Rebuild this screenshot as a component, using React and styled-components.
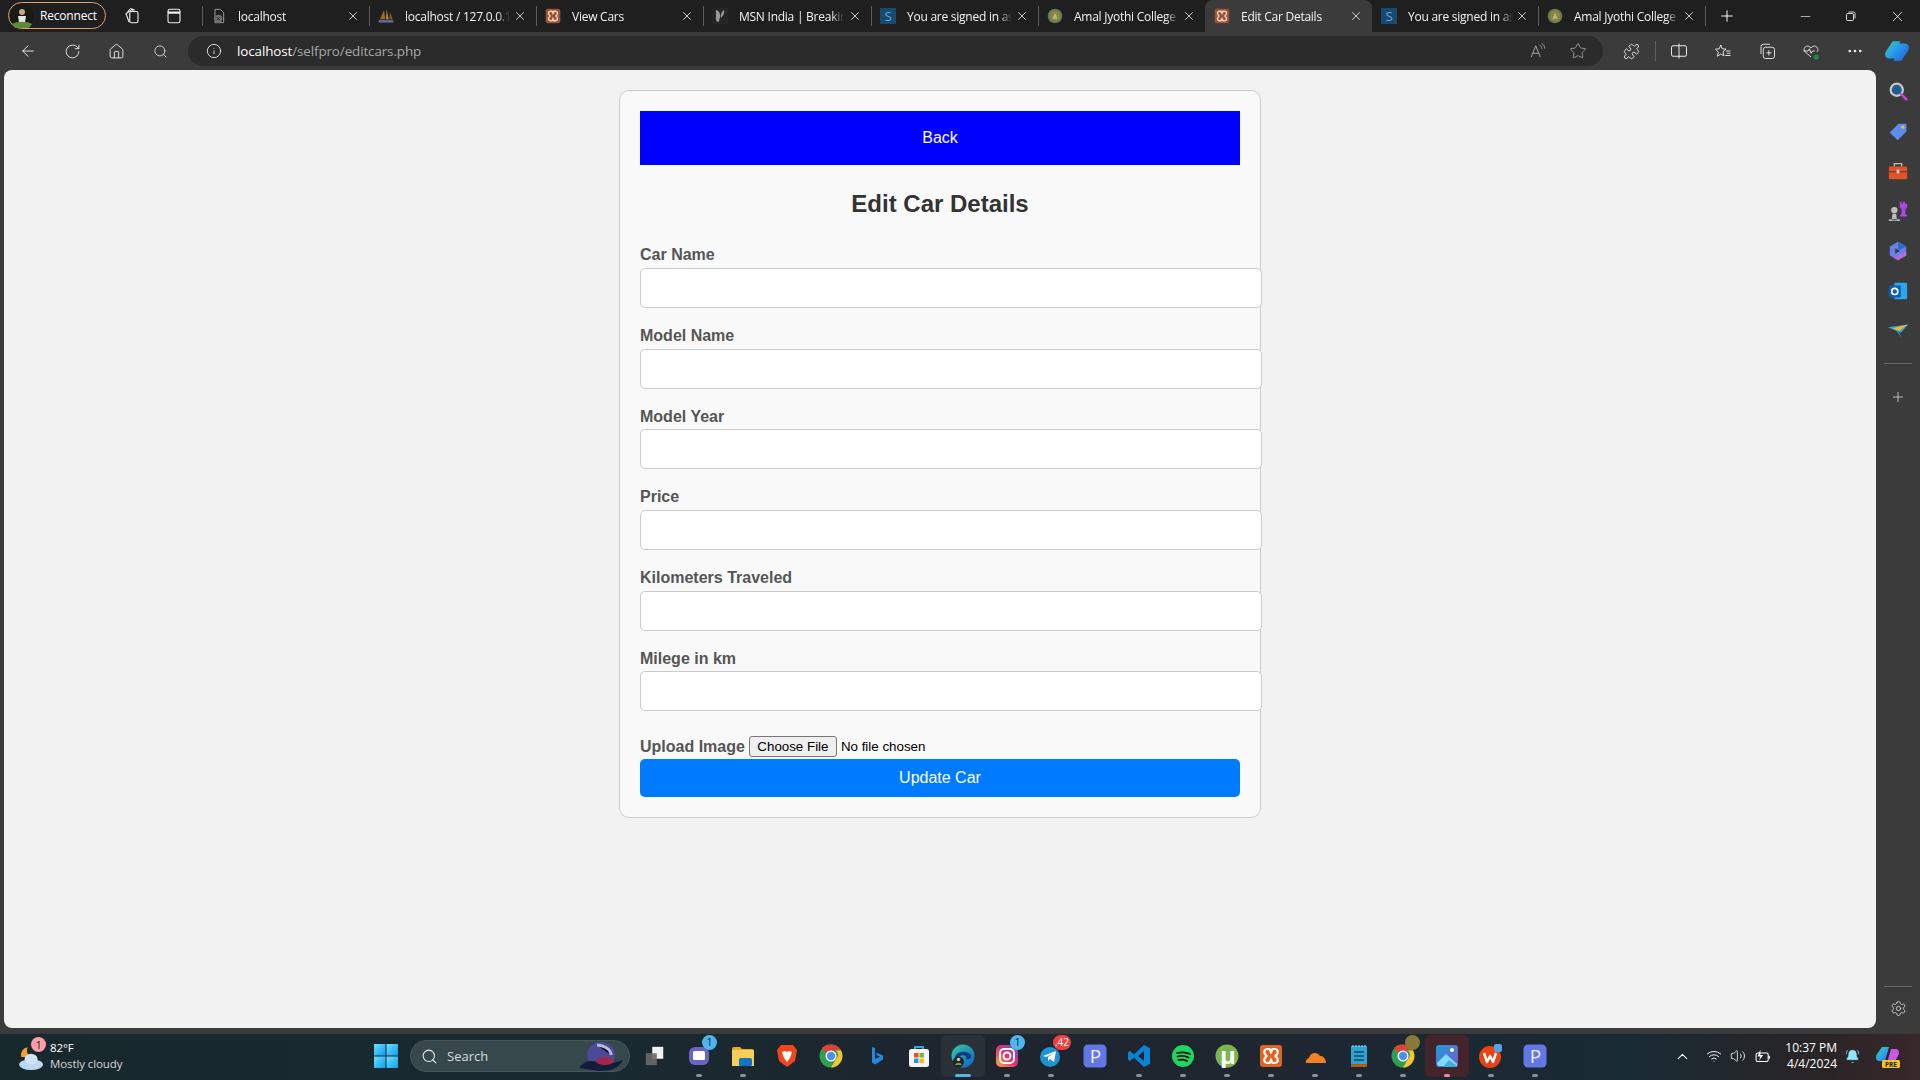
import React from "react";
import styled, { createGlobalStyle } from "styled-components";
import {
  ArrowLeft, RotateCw, Home, Search, Info, Star, Puzzle, X, Plus, Minus, MoreHorizontal, Settings,
  ChevronUp, Wifi, Volume2, BellRing,
} from "lucide-react";

const Global = createGlobalStyle`
  html, body { margin: 0; padding: 0; height: 100%; overflow: hidden; background: #3b3b3b; }
  * { box-sizing: border-box; }
`;

const Shell = styled.div`
  width: 1920px; height: 1080px; display: flex; flex-direction: column; overflow: hidden;
  background: #3b3b3b; font-family: "Open Sans", "Noto Sans", sans-serif; color: #fff;
`;

/* ---------- tab strip ---------- */
const TabStrip = styled.div`
  height: 32px; flex: none; background: #1f1f1f; display: flex; align-items: stretch; padding-left: 8px;
`;
const ProfilePill = styled.div`
  width: 98px; height: 27px; margin-top: 2px; border: 1px solid #e0a26a; border-radius: 14px;
  display: flex; align-items: center; gap: 6px; padding-left: 1px; font-size: 12px; letter-spacing: -0.2px;
`;
const StripIcon = styled.div`
  width: ${(p) => p.$w || 42}px; display: flex; align-items: center; justify-content: center; flex: none;
  margin-left: ${(p) => p.$ml || 0}px;
`;
const Tab = styled.div`
  position: relative; width: ${(p) => p.$w || 167}px; flex: none; display: flex; align-items: center; padding: 0 9px;
  font-size: 12px; letter-spacing: -0.25px; color: #f2f2f2;
  background: ${(p) => (p.$active ? "#3b3b3b" : "transparent")};
  border-radius: ${(p) => (p.$active ? "8px 8px 0 0" : "0")};
  &::before {
    content: ""; position: absolute; left: 0; top: 6px; height: 20px; width: 1px;
    background: ${(p) => (p.$sep ? "#5c5c5c" : "transparent")};
  }
`;
const FaviconBox = styled.span`
  width: 16px; height: 16px; flex: none; display: flex; margin-right: 11px;
  svg { display: block; }
`;
const TabLabel = styled.span`
  width: 105px; flex: none; white-space: nowrap; overflow: hidden;
  -webkit-mask-image: linear-gradient(to right, #000 88%, transparent 100%);
  mask-image: linear-gradient(to right, #000 88%, transparent 100%);
`;
const TabClose = styled.span`
  margin-left: auto; display: flex; color: #eee;
`;
const StripDivider = styled.div`
  width: 1px; height: 20px; margin-top: 6px; background: #5c5c5c; flex: none;
`;
const NewTab = styled.div`
  width: 42px; display: flex; align-items: center; justify-content: center; flex: none;
`;
const WindowControls = styled.div`
  margin-left: auto; display: flex; height: 100%;
`;
const WinButton = styled.div`
  width: 46px; display: flex; align-items: center; justify-content: center;
`;

/* ---------- toolbar ---------- */
const Toolbar = styled.div`
  height: 38px; flex: none; background: #3b3b3b; display: flex; align-items: center; padding-left: 6px;
`;
const NavButton = styled.div`
  width: 44px; height: 30px; display: flex; align-items: center; justify-content: center; flex: none; color: #f0f0f0;
`;
const AddressBar = styled.div`
  width: 1415px; height: 30px; margin-left: 6px; flex: none; background: #2b2b2b; border-radius: 15px;
  display: flex; align-items: center; padding-left: 18px; font-size: 13.4px; letter-spacing: -0.1px;
`;
const Url = styled.span`
  margin-left: 15px; color: #a8a8a8;
  b { font-weight: 400; color: #fff; }
`;
const BarIcons = styled.div`
  margin-left: auto; display: flex; align-items: center; padding-right: 5px;
`;
const BarIcon = styled.div`
  width: 40px; display: flex; align-items: center; justify-content: center; color: #b8b8b8;
`;
const ToolIcons = styled.div`
  display: flex; align-items: center; margin-left: 8px;
`;
const ToolIcon = styled.div`
  width: ${(p) => p.$w || 44}px; height: 30px; display: flex; align-items: center; justify-content: center; color: #eee; flex: none;
`;
const ToolSep = styled.div`
  width: 1px; height: 20px; background: #5c5c5c; margin: 0 1px 0 4px;
`;

/* ---------- middle ---------- */
const Middle = styled.div`
  flex: 1; min-height: 0; display: flex;
`;
const Page = styled.main`
  width: 1872px; margin-left: 4px; background: #f2f2f2; border-radius: 8px; padding-top: 20px;
  display: flex; flex-direction: column; align-items: center; font-family: "Liberation Sans", Arial, sans-serif;
`;
const Card = styled.div`
  width: 642px; padding: 20px; background: #f9f9f9; border: 1px solid #ccc; border-radius: 10px;
`;
const BackButton = styled.button`
  display: block; width: 600px; height: 54px; border: 0; background: #0000ff; color: #fff; font: 16px "Liberation Sans", Arial, sans-serif;
`;
const Title = styled.h2`
  margin: 25px 0 28.5px; text-align: center; font-size: 24px; line-height: 27.6px; color: #333; font-weight: 700;
`;
const FieldLabel = styled.label`
  display: block; font-size: 16px; font-weight: 700; line-height: 18.7px; margin-bottom: 3px; color: #555;
`;
const TextInput = styled.input`
  display: block; width: 622px; height: 40px; margin-bottom: 19px; padding: 10px; background: #fff;
  border: 1px solid #ccc; border-radius: 5px; font: 16px "Liberation Sans", Arial, sans-serif;
`;
const UploadRow = styled.div`
  display: flex; align-items: center; height: 21px; margin: 25px 0 2px;
`;
const UploadLabel = styled.label`
  font-size: 16px; font-weight: 700; color: #555; margin-right: 4px; white-space: nowrap;
`;
const FileInput = styled.input`
  font: 13.33px "Liberation Sans", Arial, sans-serif; color: #000; width: 300px;
  &::file-selector-button {
    height: 21px; padding: 1px 6px; margin-right: 4px; font: 13.33px "Liberation Sans", Arial, sans-serif;
    background: #efefef; border: 1px solid #767676; border-radius: 3px; color: #000; width: 88px;
  }
`;
const SubmitButton = styled.button`
  display: block; width: 600px; height: 38px; border: 0; border-radius: 5px; background: #007bff; color: #fff;
  font: 16px "Liberation Sans", Arial, sans-serif;
`;

const SideBar = styled.aside`
  width: 44px; flex: none; display: flex; flex-direction: column; align-items: center; padding-top: 1px;
`;
const SideIcon = styled.div`
  width: 44px; height: 40px; flex: none; display: flex; align-items: center; justify-content: center; color: #e8e8e8;
`;
const SideRule = styled.div`
  width: 28px; height: 1px; background: #666; flex: none; margin: ${(p) => p.$m};
`;

/* ---------- taskbar ---------- */
const GapStrip = styled.div`
  height: 5px; flex: none; background: #3b3b3b;
`;
const Taskbar = styled.footer`
  height: 47px; flex: none; display: flex; align-items: center; border-top: 1px solid #35393b; padding-bottom: 2px;
  background: linear-gradient(90deg, #17292d 0%, #182a30 30%, #1e252e 50%, #1f2630 65%, #182a33 85%, #2a2426 95%, #38282a 100%);
`;
const Weather = styled.div`
  width: 374px; flex: none; position: relative; padding-left: 50px; font-size: 11.5px; line-height: 16px; letter-spacing: -0.1px;
  color: #d6d6d6; height: 100%; display: flex; flex-direction: column; justify-content: center;
  strong { font-weight: 500; color: #fff; display: block; }
`;
const WeatherGlyph = styled.span`
  position: absolute; left: 17px; top: 10px; display: flex;
`;
const WeatherBadge = styled.span`
  position: absolute; left: 31px; top: 3px; width: 15px; height: 15px; border-radius: 50%; background: #ff9ea8; color: #222;
  font-size: 11px; line-height: 15px; text-align: center;
`;
const StartButton = styled.div`
  width: 24px; display: flex; flex: none;
`;
const SearchPill = styled.div`
  width: 220px; height: 32px; margin-left: 12px; flex: none; background: #37484d; border: 1px solid #46565a; border-radius: 16px;
  display: flex; align-items: center; padding-left: 10px; font-size: 13px; color: #d8dcdc; gap: 9px; position: relative; overflow: hidden;
`;
const PillArt = styled.span`
  position: absolute; right: 2px; top: 0; display: flex;
`;
const TaskSlot = styled.div`
  width: 44px; height: 42px; flex: none; position: relative; display: flex; align-items: center; justify-content: center;
  border-radius: 5px; margin-left: ${(p) => p.$ml || 0}px;
  background: ${(p) => p.$bg || "transparent"};
`;
const RunDot = styled.span`
  position: absolute; bottom: 0; left: 50%; transform: translateX(-50%); height: 3px; border-radius: 2px;
  width: ${(p) => (p.$active ? 16 : 6)}px;
  background: ${(p) => p.$color || "#8f8f8f"};
`;
const Badge = styled.span`
  position: absolute; top: 0; right: ${(p) => p.$r ?? 4}px; min-width: 15px; height: 15px; border-radius: 8px; padding: 0 2px;
  background: ${(p) => p.$bg || "#4fb5ee"}; color: ${(p) => p.$fg || "#12222c"}; font-size: 10px; line-height: 15px; text-align: center;
`;
const Tray = styled.div`
  margin-left: auto; display: flex; align-items: center; color: #fff; height: 100%; padding-right: 6px;
`;
const TrayIcon = styled.div`
  width: ${(p) => p.$w || 24}px; display: flex; justify-content: center; flex: none;
  margin-left: ${(p) => p.$ml || 0}px;
`;
const Clock = styled.div`
  width: 62px; margin-left: 1px; text-align: right; font-size: 12px; line-height: 16px; white-space: nowrap;
`;

/* ---------- drawings ---------- */
const S = ({ s = 16, children, vb = "0 0 24 24" }) => (
  <svg width={s} height={s} viewBox={vb} fill="none">{children}</svg>
);
const XamppGlyph = ({ bg = "#9a5230", fg = "#eed4c6" }) => (
  <>
    <rect x="1" y="1" width="22" height="22" rx="3" fill={bg} />
    <path d="M8 5h2.500l1.500 3 1.500-3H16a3 3 0 0 1 2 5l-1.500 2 1.500 2a3 3 0 0 1-2 5h-2.500L12 16l-1.500 3H8a3 3 0 0 1-2-5l1.500-2L6 10a3 3 0 0 1 2-5z" stroke={fg} strokeWidth="2.200" />
  </>
);
const LetterS = () => (
  <>
    <rect x="0" y="0" width="24" height="24" fill="#174a6e" />
    <text x="12" y="19" textAnchor="middle" fontSize="20" fontFamily="Open Sans" fill="#6ba6cf">S</text>
  </>
);
const AmalGlyph = () => (
  <>
    <circle cx="12" cy="12" r="11" fill="#5a7a62" />
    <circle cx="12" cy="12" r="8.500" fill="#8d8434" />
    <path d="M12 7l4 9H8z" fill="#b7b6a0" />
  </>
);
const Favicons = {
  file: (
    <>
      <path d="M6 2h8l5 5v15H6z" stroke="#9a9a9a" strokeWidth="1.500" />
      <circle cx="11" cy="16" r="6" fill="#6d6d6d" />
      <path d="M9 14l4 4m0-4l-4 4" stroke="#1f1f1f" strokeWidth="1.200" />
    </>
  ),
  pma: (
    <>
      <path d="M3 17L9 3l2 14z" fill="#9a6a32" />
      <path d="M12 17l1-15 3 15z" fill="#c08a45" />
      <path d="M17 17l1-11 4 11z" fill="#8a5a2a" />
      <rect x="1" y="18" width="22" height="4" fill="#5f6b8c" />
    </>
  ),
  xampp: <XamppGlyph />,
  msn: (
    <>
      <rect width="24" height="24" fill="#262626" />
      <path d="M6 3c5 1 7 6 6 11l-2 7c-3 0-5-4-4-8zM18 3c1 5-1 9-5 12 0-5 1-9 5-12z" fill="#9a9a9a" />
    </>
  ),
  s: <LetterS />,
  amal: <AmalGlyph />,
};
const Favicon = ({ k }) => <FaviconBox><S>{Favicons[k]}</S></FaviconBox>;

const ChromeLogo = () => (
  <>
    <circle cx="12" cy="12" r="11.500" fill="#2e9e4f" />
    <path d="M12 .5A11.500 11.500 0 0 1 22 6.500H12A5.500 5.500 0 0 0 7 9.500L3 3.800A11.500 11.500 0 0 1 12 .5z" fill="#e0413a" />
    <path d="M22 6.500A11.500 11.500 0 0 1 12 23.500l5-8.500a5.500 5.500 0 0 0 0-8.500z" fill="#f8c52f" />
    <circle cx="12" cy="12" r="5.500" fill="#fff" />
    <circle cx="12" cy="12" r="4.200" fill="#4a8ff0" />
  </>
);
const PLogo = () => (
  <>
    <rect x="0.500" y="0.500" width="23" height="23" rx="4.500" fill="#6376e6" />
    <text x="12.500" y="19" textAnchor="middle" fontSize="19" fontFamily="Open Sans" fill="#eef0ff">P</text>
  </>
);
const Defs = () => (
  <svg width="0" height="0" style={{ position: "absolute" }}>
    <defs>
      <linearGradient id="ig" x1="0" y1="1" x2="1" y2="0">
        <stop offset="0" stopColor="#f9b23c" /><stop offset=".5" stopColor="#e1306c" /><stop offset="1" stopColor="#6a4be0" />
      </linearGradient>
      <linearGradient id="edge" x1="0" y1="0" x2="1" y2="1">
        <stop offset="0" stopColor="#38c8a0" /><stop offset="1" stopColor="#1060c8" />
      </linearGradient>
      <linearGradient id="photo" x1="0" y1="0" x2="1" y2="1">
        <stop offset="0" stopColor="#1b9be0" /><stop offset="1" stopColor="#7a5ac8" />
      </linearGradient>
      <linearGradient id="copilot" x1="0" y1="0" x2="1" y2="1">
        <stop offset="0" stopColor="#37d39c" /><stop offset=".6" stopColor="#2b9cf0" /><stop offset="1" stopColor="#1f6ae0" />
      </linearGradient>
      <linearGradient id="copilot2" x1="0" y1="0" x2="1" y2="1">
        <stop offset="0" stopColor="#2bb0f0" /><stop offset="1" stopColor="#1f5ae0" />
      </linearGradient>
      <linearGradient id="win" x1="0" y1="0" x2="1" y2="1">
        <stop offset="0" stopColor="#6ce0ff" /><stop offset="1" stopColor="#0f9cf0" />
      </linearGradient>
    </defs>
  </svg>
);

const Apps = {
  teams: (
    <>
      <rect x="2" y="3" width="20" height="18" rx="6" fill="#6a64c8" />
      <rect x="6" y="7" width="12" height="9" rx="1.500" fill="#fff" />
    </>
  ),
  explorer: (
    <>
      <path d="M1 5a2 2 0 0 1 2-2h6l2 2h10a2 2 0 0 1 2 2v14H1z" fill="#e3ad2c" />
      <rect x="1" y="6" width="22" height="16" fill="#f6cf58" />
      <rect x="8" y="14" width="13" height="8" rx="1.500" fill="#1473c4" />
    </>
  ),
  brave: (
    <>
      <path d="M6 1h12l4 5-2 11-8 6-8-6L2 6z" fill="#f1461b" />
      <path d="M7 8l3-1 2 1 2-1 3 1-2 6-3 4-3-4z" fill="#fff" />
    </>
  ),
  chrome: <ChromeLogo />,
  bing: <path d="M9 3l3 1v11l5-2.500-3-1-1-3 7 3v4l-8 5-3-2z" fill="#1f8ae0" />,
  store: (
    <>
      <path d="M8 6V3h8v3" stroke="#29a9e8" strokeWidth="2" />
      <rect x="2" y="5" width="20" height="18" rx="2.500" fill="#f4f4f4" />
      <rect x="7" y="9" width="4.500" height="4.500" fill="#e8502a" />
      <rect x="12.500" y="9" width="4.500" height="4.500" fill="#7ab828" />
      <rect x="7" y="14.500" width="4.500" height="4.500" fill="#1a9be0" />
      <rect x="12.500" y="14.500" width="4.500" height="4.500" fill="#f8b81a" />
    </>
  ),
  edge: (
    <>
      <circle cx="12" cy="12" r="11.500" fill="url(#edge)" />
      <path d="M4 13c2-6 12-7 16-2 1 3-2 5-5 4 2-3-3-5-6-3-2 2-1 6 2 8-4 0-7-3-7-7z" fill="#0b3c84" />
      <circle cx="7.500" cy="18" r="5.500" fill="#1d2430" />
      <circle cx="7.500" cy="15.500" r="1.800" fill="#d8c0a0" />
      <path d="M4 21c1-3 6-3 7 0z" fill="#7a9a40" />
    </>
  ),
  instagram: (
    <>
      <rect x="1" y="1" width="22" height="22" rx="5" fill="url(#ig)" />
      <rect x="5" y="5" width="14" height="14" rx="4" stroke="#fff" strokeWidth="2" />
      <circle cx="12" cy="12" r="3.500" stroke="#fff" strokeWidth="2" />
    </>
  ),
  telegram: (
    <>
      <circle cx="11" cy="13" r="10" fill="#1c93d2" />
      <path d="M4 12l13-5-2 11-4-3-2 2v-4l6-4-8 4z" fill="#fff" />
    </>
  ),
  p: <PLogo />,
  vscode: (
    <path d="M17 1l6 3v16l-6 3-10-9.500L3 17l-2-1.500v-7L3 7l4 3.500zM17 7l-6 5 6 5z" fill="#0a84d6" fillRule="evenodd" />
  ),
  spotify: (
    <>
      <circle cx="12" cy="12" r="11" fill="#1ed760" />
      <path d="M6 9c4-1 9-1 13 1M6.500 12.500c4-1 8-.5 11 1M7.500 16c3-.7 6-.4 8.500 1" stroke="#121212" strokeWidth="1.800" strokeLinecap="round" />
    </>
  ),
  utorrent: (
    <>
      <circle cx="12" cy="12" r="11.500" fill="#7db54a" />
      <text x="13" y="20" textAnchor="middle" fontSize="24" fontFamily="Open Sans" fontWeight="700" fill="#fff">μ</text>
    </>
  ),
  xampp: <XamppGlyph bg="#e0651f" fg="#fff" />,
  cloudflare: (
    <path d="M3 19a4 4 0 0 1 3-5c1-5 8-7 11-2 3-.5 6 3 6 7z" fill="#f48120" />
  ),
  notepad: (
    <>
      <rect x="4" y="2" width="16" height="20" fill="#2ea3d0" />
      <rect x="4" y="20" width="16" height="3" fill="#a85a20" />
      <path d="M7 8h10M7 12h10M7 16h10" stroke="#0c4a68" strokeWidth="1.500" />
      <path d="M6 1v2M9 1v2M12 1v2M15 1v2M18 1v2" stroke="#bfe4f2" strokeWidth="1" />
    </>
  ),
  photos: (
    <>
      <rect x="1" y="1" width="22" height="22" rx="3" fill="url(#photo)" />
      <circle cx="17" cy="6" r="2" fill="#fff" />
      <path d="M2 19l9-9 11 10v2H3z" fill="#7fdcf8" />
      <path d="M8 23l6-7 8 6v1z" fill="#3ab0e0" />
    </>
  ),
  wps: (
    <>
      <circle cx="11" cy="13" r="11" fill="#e9430f" />
      <path d="M5 9l3 9 3-6 3 6 3-9" stroke="#fff" strokeWidth="2.400" strokeLinejoin="round" />
      <rect x="15" y="0" width="8" height="8" rx="2" fill="#5aa0e8" />
    </>
  ),
};

const taskApps = [
  { k: "teams", badge: "1", dot: true },
  { k: "explorer", dot: true },
  { k: "brave" },
  { k: "chrome" },
  { k: "bing" },
  { k: "store" },
  { k: "edge", active: true },
  { k: "instagram", badge: "1", dot: true },
  { k: "telegram", badge: ".42", red: true, dot: true },
  { k: "p" },
  { k: "vscode", dot: true },
  { k: "spotify", dot: true },
  { k: "utorrent", dot: true },
  { k: "xampp", dot: true },
  { k: "cloudflare", dot: true },
  { k: "notepad", dot: true },
  { k: "chrome", dot: true, avatar: true },
  { k: "photos", photo: true },
  { k: "wps", dot: true },
  { k: "p", dot: true },
];

const tabs = [
  { k: "file", t: "localhost", sep: true },
  { k: "pma", t: "localhost / 127.0.0.1 | phpMyAdmin", sep: true },
  { k: "xampp", t: "View Cars", sep: true },
  { k: "msn", t: "MSN India | Breaking News", sep: true, w: 168 },
  { k: "s", t: "You are signed in as", sep: true },
  { k: "amal", t: "Amal Jyothi College", sep: true },
  { k: "xampp", t: "Edit Car Details", active: true },
  { k: "s", t: "You are signed in as", w: 166 },
  { k: "amal", t: "Amal Jyothi College", sep: true },
];

const fields = ["Car Name", "Model Name", "Model Year", "Price", "Kilometers Traveled", "Milege in km"];

const sw = 1.25;

export default function App() {
  return (
    <Shell>
      <Global />
      <Defs />
      <TabStrip>
        <ProfilePill>
          <S s={24}>
            <circle cx="12" cy="12" r="12" fill="#1a1a14" />
            <circle cx="12" cy="8" r="3" fill="#c8a888" />
            <path d="M8 12h8l-1 6h-6z" fill="#e8e8e8" />
            <path d="M2 20c5-3 15-3 20 0l-3 4H5z" fill="#5f8a3a" />
          </S>
          Reconnect
        </ProfilePill>
        <StripIcon $ml={5}>
          <S s={18}>
            <rect x="9" y="6" width="11" height="15" rx="2.500" stroke="#eee" strokeWidth="1.500" />
            <path d="M8 20L4 9l8-6 2 3" stroke="#eee" strokeWidth="1.500" />
            <path d="M6 6l4-4 6 2" stroke="#eee" strokeWidth="1.200" />
          </S>
        </StripIcon>
        <StripIcon>
          <S s={18}>
            <rect x="4" y="3" width="16" height="18" rx="2.500" stroke="#eee" strokeWidth="1.500" />
            <path d="M4 7.500h16" stroke="#eee" strokeWidth="3" />
          </S>
        </StripIcon>
        <StripIcon $w={7} />
        {tabs.map((t, i) => (
          <Tab key={i} $sep={t.sep} $active={t.active} $w={t.w}>
            <Favicon k={t.k} />
            <TabLabel>{t.t}</TabLabel>
            <TabClose><X size={14} strokeWidth={1.4} /></TabClose>
          </Tab>
        ))}
        <StripDivider />
        <NewTab><Plus size={18} strokeWidth={1.3} /></NewTab>
        <WindowControls>
          <WinButton><Minus size={15} strokeWidth={1} /></WinButton>
          <WinButton>
            <S s={12}>
              <rect x="3" y="7" width="14" height="14" rx="2.500" stroke="#eee" strokeWidth="1.800" />
              <path d="M7 4h10a3 3 0 0 1 3 3v10" stroke="#eee" strokeWidth="1.800" />
            </S>
          </WinButton>
          <WinButton><X size={17} strokeWidth={1.1} /></WinButton>
        </WindowControls>
      </TabStrip>

      <Toolbar>
        <NavButton><ArrowLeft size={18} strokeWidth={sw} /></NavButton>
        <NavButton><RotateCw size={17} strokeWidth={sw} /></NavButton>
        <NavButton><Home size={17} strokeWidth={sw} /></NavButton>
        <NavButton><Search size={15} strokeWidth={sw} /></NavButton>
        <AddressBar>
          <Info size={16} strokeWidth={1.2} />
          <Url><b>localhost</b>/selfpro/editcars.php</Url>
          <BarIcons>
            <BarIcon>
              <S s={18}>
                <path d="M3 20L9 5l6 15M5 15h8" stroke="#a8a8a8" strokeWidth="1.300" />
                <path d="M14 4c2 1 3 3 3 5M17 2c3 2 4 4 4 7" stroke="#a8a8a8" strokeWidth="1.200" />
              </S>
            </BarIcon>
            <BarIcon><Star size={18} strokeWidth={1.1} color="#a8a8a8" /></BarIcon>
          </BarIcons>
        </AddressBar>
        <ToolIcons>
          <ToolIcon $w={40}><Puzzle size={17} strokeWidth={sw} /></ToolIcon>
          <ToolSep />
          <ToolIcon>
            <S s={18}>
              <rect x="2" y="5" width="20" height="14" rx="2" stroke="#eee" strokeWidth="1.300" />
              <path d="M12 2v20" stroke="#eee" strokeWidth="1.300" />
            </S>
          </ToolIcon>
          <ToolIcon>
            <S s={18}>
              <path d="M9 4l2 5 5 .5-4 3.500 1.300 5.500L9 16l-4.500 3 1.300-5.500L2 9.500 7 9z" stroke="#eee" strokeWidth="1.200" />
              <path d="M16 12h6M17 15h5M15 18h7" stroke="#eee" strokeWidth="1.200" />
            </S>
          </ToolIcon>
          <ToolIcon>
            <S s={18}>
              <rect x="7" y="7" width="15" height="15" rx="3" stroke="#eee" strokeWidth="1.200" />
              <path d="M4 16V6a3 3 0 0 1 3-3h9M14.500 11v7M11 14.500h7" stroke="#eee" strokeWidth="1.200" />
            </S>
          </ToolIcon>
          <ToolIcon>
            <S s={18}>
              <path d="M12 20L4 13c-4-5 3-11 8-5 5-6 12 0 8 5" stroke="#eee" strokeWidth="1.200" />
              <path d="M2 12h6l2-3 2 6 2-3h3" stroke="#eee" strokeWidth="1.200" />
              <circle cx="19" cy="20" r="3.500" fill="#1e8a3c" />
            </S>
          </ToolIcon>
          <ToolIcon><MoreHorizontal size={18} strokeWidth={1.6} /></ToolIcon>
          <ToolIcon $w={40}>
            <S s={26}>
              <path d="M8 3h7l-5 16H5C1 19 0 15 2 12z" fill="url(#copilot)" />
              <path d="M16 21H9l5-16h5c4 0 5 4 3 7z" fill="url(#copilot2)" />
            </S>
          </ToolIcon>
        </ToolIcons>
      </Toolbar>

      <Middle>
        <Page>
          <Card>
            <BackButton>Back</BackButton>
            <Title>Edit Car Details</Title>
            {fields.map((f) => (
              <div key={f}>
                <FieldLabel>{f}</FieldLabel>
                <TextInput type="text" />
              </div>
            ))}
            <UploadRow>
              <UploadLabel>Upload Image</UploadLabel>
              <FileInput type="file" />
            </UploadRow>
            <SubmitButton>Update Car</SubmitButton>
          </Card>
        </Page>
        <SideBar>
          <SideIcon>
            <S s={21}>
              <circle cx="10" cy="10" r="7" fill="#1d5f8c" stroke="#c8c8c8" strokeWidth="2.500" />
              <path d="M15 15l6 6" stroke="#d040e0" strokeWidth="3" strokeLinecap="round" />
            </S>
          </SideIcon>
          <SideIcon>
            <S s={21}>
              <path d="M12 3h8a1 1 0 0 1 1 1v8L11 22 2 13z" fill="#5b8cf0" />
              <circle cx="17" cy="7" r="1.800" fill="#f6c51a" />
            </S>
          </SideIcon>
          <SideIcon>
            <S s={22}>
              <path d="M8 7V4h8v3" stroke="#bbb" strokeWidth="1.500" />
              <rect x="2" y="7" width="20" height="14" rx="1.500" fill="#e0542a" />
              <rect x="2" y="12" width="20" height="1.500" fill="#9a3618" />
              <rect x="10.500" y="10.500" width="3" height="4" fill="#ddd" />
            </S>
          </SideIcon>
          <SideIcon>
            <S s={22}>
              <circle cx="8" cy="11" r="3.500" fill="#bdbdbd" />
              <path d="M5 22l1-7h4l1 7zM2 23h12v-2H2z" fill="#bdbdbd" />
              <path d="M14 2h2v2h1.500V2h2v2H22V2v6l-2 2v5l2 2v1h-8v-1l2-2v-5l-2-2z" fill="#b046e8" />
            </S>
          </SideIcon>
          <SideIcon>
            <S s={22}>
              <path d="M12 2l9 5v10l-9 5-9-5V7z" fill="#6a7fe8" />
              <path d="M12 2l9 5-9 5z" fill="#2f6ad0" />
              <path d="M21 13v4l-9 5-5-3z" fill="#b56ae0" />
              <path d="M9 9l5 3-5 3z" fill="#3b3b3b" />
            </S>
          </SideIcon>
          <SideIcon>
            <S s={22}>
              <rect x="8" y="3" width="14" height="18" rx="1.500" fill="#28a8ea" />
              <rect x="2" y="6" width="13" height="13" rx="1.500" fill="#0a5fb4" />
              <circle cx="8.500" cy="12.500" r="3.300" stroke="#fff" strokeWidth="1.800" />
            </S>
          </SideIcon>
          <SideIcon>
            <S s={22}>
              <path d="M1 8l22-3-8 9z" fill="#2ea8e8" />
              <path d="M6 9l17-4-10 7z" fill="#f4b81e" />
              <path d="M10 12l3 0 3 8z" fill="#1f7fd0" />
            </S>
          </SideIcon>
          <SideRule $m="12px 0 13px" />
          <SideIcon><Plus size={16} strokeWidth={1.1} /></SideIcon>
          <SideRule $m="auto 0 1px" />
          <SideIcon><Settings size={17} strokeWidth={1.1} /></SideIcon>
        </SideBar>
      </Middle>
      <GapStrip />

      <Taskbar>
        <Weather>
          <WeatherGlyph>
            <S s={26}>
              <path d="M4 12a7 7 0 0 1 6-9 6 6 0 0 0 5 9z" fill="#f4a028" />
              <ellipse cx="13" cy="19" rx="11" ry="5" fill="#bcd8f2" />
              <ellipse cx="13" cy="14" rx="6" ry="5" fill="#cfe4f8" />
            </S>
          </WeatherGlyph>
          <WeatherBadge>1</WeatherBadge>
          <strong>82°F</strong>
          Mostly cloudy
        </Weather>
        <StartButton>
          <svg width="24" height="24" viewBox="0 0 24 24">
            <rect x="0" y="0" width="11.500" height="11.500" fill="url(#win)" />
            <rect x="12.500" y="0" width="11.500" height="11.500" fill="url(#win)" />
            <rect x="0" y="12.500" width="11.500" height="11.500" fill="url(#win)" />
            <rect x="12.500" y="12.500" width="11.500" height="11.500" fill="url(#win)" />
          </svg>
        </StartButton>
        <SearchPill>
          <Search size={17} strokeWidth={1.5} color="#e8e8e8" />
          Search
          <PillArt>
            <svg width="50" height="30" viewBox="0 0 50 30">
              <ellipse cx="24" cy="14" rx="14" ry="13" fill="#4a4a98" />
              <path d="M20 4c6 0 14 4 14 10" stroke="#b8b8d8" strokeWidth="3" />
              <path d="M2 27c6-8 12-8 18-6 8 2 16 2 26-2-4 8-12 11-24 11z" fill="#141c3c" />
              <ellipse cx="28" cy="20" rx="9" ry="4" fill="#a02848" />
            </svg>
          </PillArt>
        </SearchPill>
        <TaskSlot $ml={3}>
          <S s={22}>
            <rect x="9" y="2" width="12" height="13" fill="#f2f2f2" />
            <rect x="2" y="9" width="12" height="13" fill="#6a6a6a" fillOpacity=".9" />
          </S>
        </TaskSlot>
        {taskApps.map((a, i) => (
          <TaskSlot key={i} $bg={a.active ? "#2a3038" : a.photo ? "#43242a" : undefined}>
            <S s={24}>{Apps[a.k]}</S>
            {a.avatar && <Badge $r={5} $bg="#8a7a3a" />}
            {a.badge && (
              <Badge $r={a.red ? 2 : 4} $bg={a.red ? "#ef3f3f" : undefined} $fg={a.red ? "#fff" : undefined}>{a.badge}</Badge>
            )}
            {a.active && <RunDot $active $color="#4fb5ee" />}
            {a.photo && <RunDot $color="#f08a9a" />}
            {a.dot && <RunDot />}
          </TaskSlot>
        ))}
        <Tray>
          <TrayIcon><ChevronUp size={17} strokeWidth={1.6} /></TrayIcon>
          <TrayIcon $ml={8}><Wifi size={16} strokeWidth={1.4} /></TrayIcon>
          <TrayIcon><Volume2 size={16} strokeWidth={1.2} /></TrayIcon>
          <TrayIcon>
            <S s={17}>
              <rect x="3" y="7" width="17" height="12" rx="2" stroke="#fff" strokeWidth="1.500" />
              <rect x="20.500" y="11" width="2" height="4" fill="#fff" />
              <path d="M9 2L5 12h4l-2 6 6-8H9z" fill="#fff" />
            </S>
          </TrayIcon>
          <Clock>10:37 PM<br />4/4/2024</Clock>
          <TrayIcon $ml={5} $w={20}><BellRing size={15} fill="#8fe4ff" color="#8fe4ff" strokeWidth={1} /></TrayIcon>
          <TrayIcon $w={52}>
            <S s={24}>
              <path d="M6 3h7l-4 14H3C0 17-1 13 1 10z" fill="url(#copilot)" />
              <path d="M18 19h-7l4-14h5c3 0 4 4 2 7z" fill="#c65ae0" />
              <rect x="6" y="16" width="18" height="8" rx="1.500" fill="#f6c51a" />
              <text x="15" y="22.500" textAnchor="middle" fontSize="6.500" fontWeight="700" fontFamily="Open Sans" fill="#222">PRE</text>
            </S>
          </TrayIcon>
        </Tray>
      </Taskbar>
    </Shell>
  );
}
